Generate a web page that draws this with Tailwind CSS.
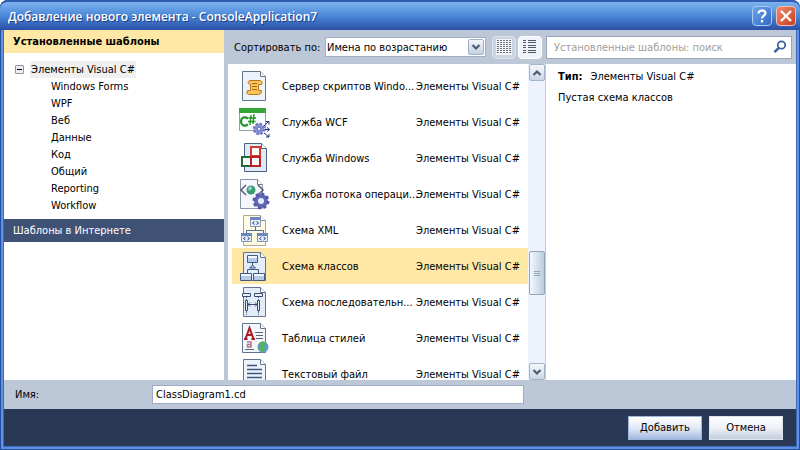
<!DOCTYPE html>
<html lang="ru">
<head>
    <meta charset="UTF-8">
    <meta name="viewport" content="width=device-width, initial-scale=1.0">
    <title>Добавление нового элемента - ConsoleApplication7</title>
    <script src="https://cdn.jsdelivr.net/npm/@tailwindcss/browser@4"></script>
</head>
<body class="h-screen overflow-hidden bg-white font-['DejaVu_Sans_Condensed','DejaVu_Sans',sans-serif] text-[11px] leading-[17px] text-black">
    <div class="flex h-full flex-col rounded-t-lg bg-[#3c6cc0] px-1 pb-1 shadow-[inset_1px_0_#2450a0,inset_-1px_-1px_#2450a0,inset_3px_0_#5f90e4,inset_-3px_-3px_#5f90e4]">

        <!-- Title bar -->
        <header class="-mx-1 flex h-[30px] shrink-0 items-center gap-1 rounded-t-lg border-t-2 border-[#2f5cae] bg-linear-to-b from-[#7db4ee] via-[#4a86d8] to-[#2b4fa5] pr-1 pl-2">
            <h1 class="flex-1 truncate font-['Open_Sans',sans-serif] text-[12px] font-semibold text-white [text-shadow:1px_1px_#1f3f8c]">Добавление нового элемента - ConsoleApplication7</h1>
            <button type="button" aria-label="Справка" class="flex size-5 items-center justify-center rounded-sm border border-[#a9cdf5] bg-linear-to-br from-[#6ca4ea] to-[#3468c4]">
                <svg class="size-4" viewBox="0 0 16 16" fill="none" stroke="#fff" stroke-width="2.2"><path d="M4.5 5.5C4.5 1.5 11.5 1.5 11.5 5.3C11.5 7.6 8 7.6 8 10.4M8 12V14.4"/></svg>
            </button>
            <button type="button" aria-label="Закрыть" class="flex size-5 items-center justify-center rounded-sm border border-[#f0c0b4] bg-linear-to-br from-[#ee8a6c] to-[#c93a18]">
                <svg class="size-4" viewBox="0 0 16 16" fill="none" stroke="#fff" stroke-width="2.4"><path d="M3 3L13 13M13 3L3 13"/></svg>
            </button>
        </header>

        <main class="flex min-h-0 flex-1 gap-1 bg-[#bcc7d8]">
            <!-- Template tree -->
            <nav class="w-[220px] shrink-0 bg-white">
                <h2 class="h-[23px] bg-[#ffe8a6] pl-[9px] leading-[24px] font-bold">Установленные шаблоны</h2>
                <div class="flex items-center gap-[6px] pt-2 pl-[11px]">
                    <button type="button" aria-label="Свернуть" class="flex size-[9px] items-center justify-center rounded-[1px] border border-[#8b97a8] bg-[#eceef2]"><span class="h-px w-[5px] bg-black"></span></button>
                    <a href="#" class="bg-[#f0f0f0] px-px">Элементы Visual C#</a>
                </div>
                <ul class="pl-[47px]">
                    <li><a href="#">Windows Forms</a></li>
                    <li><a href="#">WPF</a></li>
                    <li><a href="#">Веб</a></li>
                    <li><a href="#">Данные</a></li>
                    <li><a href="#">Код</a></li>
                    <li><a href="#">Общий</a></li>
                    <li><a href="#">Reporting</a></li>
                    <li><a href="#">Workflow</a></li>
                </ul>
                <a href="#" class="mt-[5px] block h-[23px] bg-[#3f5175] pl-[9px] leading-[24px] text-white">Шаблоны в Интернете</a>
            </nav>

            <div class="flex min-w-0 flex-1 flex-col">
                <!-- Toolbar -->
                <div class="flex h-[34px] shrink-0 items-center pr-1 pl-[6px]">
                    <label for="sort" class="w-[91px] shrink-0 whitespace-nowrap">Сортировать по:</label>
                    <div class="relative w-[161px] shrink-0">
                        <select id="sort" class="h-5 w-full appearance-none border border-[#9fb0c8] bg-white pl-px">
                            <option>Имена по возрастанию</option>
                            <option>Имена по убыванию</option>
                        </select>
                        <span class="pointer-events-none absolute top-[2px] right-[2px] flex size-4 items-center justify-center rounded-[2px] border border-[#9fb0c8] bg-linear-to-b from-[#f4f7fb] to-[#c4d0e0]">
                            <svg class="h-2 w-[10px]" viewBox="0 0 10 8" fill="none" stroke="#4d5c74" stroke-width="2.2"><path d="M1.5 2L5 5.5L8.5 2"/></svg>
                        </span>
                    </div>
                    <button type="button" aria-label="Мелкие значки" class="ml-[6px] flex h-[23px] w-6 items-center justify-center rounded-sm border border-[#dce2ec] bg-[#ccd4e1]">
                        <svg class="size-4" viewBox="0 0 16 16" fill="none"><path fill="#f4f6fa" d="M0 0H16V16H0Z"/><path stroke="#6a717c" d="M1 1.5H3M4 1.5H6M7 1.5H9M10 1.5H12M13 1.5H15M1 3.5H3M4 3.5H6M7 3.5H9M10 3.5H12M13 3.5H15M1 5.500H3M4 5.500H6M7 5.500H9M10 5.500H12M13 5.500H15M1 7.500H3M4 7.500H6M7 7.500H9M10 7.500H12M13 7.500H15M1 9.500H3M4 9.500H6M7 9.500H9M10 9.500H12M13 9.500H15M1 11.500H3M4 11.500H6M7 11.500H9M10 11.500H12M13 11.500H15M1 13.500H3M4 13.500H6M7 13.500H9M10 13.500H12M13 13.500H15"/></svg>
                    </button>
                    <button type="button" aria-label="Средние значки" class="ml-[2px] flex h-[23px] w-6 items-center justify-center rounded-sm border border-white bg-[#f0f3f8]">
                        <svg class="size-4" viewBox="0 0 16 16" fill="none" stroke="#505868"><path d="M1 1.500H4M6 1.500H14M1 3.500H4M6 3.500H14M1 6.500H4M6 6.500H14M1 8.500H4M6 8.500H14M1 11.500H4M6 11.500H14M1 13.500H4M6 13.500H14"/></svg>
                    </button>
                    <div class="ml-1 flex h-[23px] min-w-0 flex-1 items-center border border-[#9aa5b8] bg-white pr-1 pl-[7px]">
                        <input type="search" aria-label="Установленные шаблоны: поиск" placeholder="Установленные шаблоны: поиск" class="min-w-0 flex-1 outline-none placeholder:text-[#a39e98]">
                        <svg class="size-[14px]" viewBox="0 0 14 14" fill="none" stroke="#3c5fa8"><circle cx="8.5" cy="5" r="3.7" stroke-width="1.7"/><path stroke-width="2.4" d="M5.8 7.8L1.5 12.2"/></svg>
                    </div>
                </div>

                <div class="flex min-h-0 flex-1">
                    <!-- Item list -->
                    <div class="flex w-[318px] shrink-0 overflow-hidden bg-white">
                        <ul class="min-w-0 flex-1 pt-1 pl-1 [&>li]:flex [&>li]:h-9 [&>li]:items-center [&>li]:pl-[6px] [&_svg]:mr-3 [&_svg]:size-8 [&_svg]:shrink-0 [&_b]:w-[134px] [&_b]:shrink-0 [&_b]:whitespace-nowrap [&_b]:font-normal [&_span]:whitespace-nowrap">
                            <li>
                                <svg viewBox="0 0 32 32"><path fill="#eef3fb" stroke="#62748e" d="M4.5 1.5H22.5L27.5 6.5V30.5H4.5Z"/><path fill="#fff" stroke="#62748e" d="M22.5 1.5V6.5H27.5"/><path fill="#f8c45c" stroke="#b57a18" d="M11.500 10.500H22.500Q25.500 12 23.500 14.500H20.500V20.500H23.500Q24 24.500 20.500 24.500H10.500Q7.500 23.500 9.500 20.500H12.500V14.500H11.500Q8.500 12.500 11.500 10.500Z"/><path stroke="#a36a10" d="M14 13.500H19M14 16.500H19M14 19.500H19"/></svg>
                                <b>Сервер скриптов Windo...</b><span>Элементы Visual C#</span>
                            </li>
                            <li>
                                <svg viewBox="0 0 32 32"><path fill="#f8fbff" stroke="#8fa3a3" d="M1.500 2.500H27.500V24.500H1.500Z"/><path fill="#35a535" d="M1 2H28V7H1Z"/><path fill="none" stroke="#229322" stroke-width="2.200" d="M10 12.500C5 9.500 3 13 3 15.500C3 19 6 21 10 18.500"/><path fill="none" stroke="#229322" stroke-width="1.400" d="M13 9L12 19M16 8L15 18M10.500 12H18M10 15.500H17.500"/><circle cx="21" cy="23" r="5" fill="#9298d8" stroke="#7078c0" stroke-width="2.500" stroke-dasharray="2.500 1.400"/><circle cx="21" cy="23" r="2" fill="#dfe3ff" stroke="#5460ae"/><path fill="none" stroke="#1c2c80" d="M26 20L31 15M28 15.500H31V18.500M27 23.500H31.500M29 21.500L31.500 23.500L29 25.500M26 27L31 31M31 28V31H28"/></svg>
                                <b>Служба WCF</b><span>Элементы Visual C#</span>
                            </li>
                            <li>
                                <svg viewBox="0 0 32 32"><path fill="#dfe9f8" stroke="#4d6384" d="M6.500 1.500H23.500L28.500 6.500V29.500H6.500Z"/><path fill="#fff" stroke="#4d6384" d="M23.500 1.500V6.500H28.500"/><g fill="#fff" stroke-width="2"><path stroke="#d53b2f" d="M13 5H22V14H13Z"/><path stroke="#236c36" d="M4 15H13V24H4Z"/><path stroke="#b82222" d="M13 15H22V24H13Z"/></g></svg>
                                <b>Служба Windows</b><span>Элементы Visual C#</span>
                            </li>
                            <li>
                                <svg viewBox="0 0 32 32"><path fill="#f4f7fc" stroke="#8a94a6" d="M2.500 1.500H19.500L24.500 6.500V30.500H2.500Z"/><path fill="#fff" stroke="#6d7b91" d="M19.500 1.500V6.500H24.500"/><path fill="none" stroke="#566174" stroke-width="1.500" d="M8 7L3 12L8 17M20 7L25 12L20 17"/><circle cx="13" cy="12" r="4.500" fill="#3f9a70"/><path fill="#8fd1e8" d="M10 10L13 8L14 11L11 13Z"/><circle cx="23" cy="23" r="7" fill="#6068b4" stroke="#535aa8" stroke-width="3" stroke-dasharray="3 2.500"/><circle cx="23" cy="23" r="3" fill="#e8ebff"/></svg>
                                <b>Служба потока операци...</b><span>Элементы Visual C#</span>
                            </li>
                            <li>
                                <svg viewBox="0 0 32 32"><path fill="#fffbe0" stroke="#a9a98e" d="M5.500 1.500H22.500L27.500 6.500V31.500H5.500Z"/><path fill="#fff" stroke="#8e9aa8" d="M22.500 1.500V6.500H27.500"/><path fill="none" stroke="#526a9c" d="M17.500 12V16.500M8.500 20V16.500H25.500V20"/><g fill="#e8eefc" stroke="#8596bc"><path d="M12.500 3.500H22.500V12.500H12.500Z"/><path d="M3.500 19.500H13.500V27.500H3.500Z"/><path d="M19.500 19.500H29.500V27.500H19.500Z"/></g><path fill="#6d86c0" d="M12 3H23V6H12ZM3 19H14V22H3ZM19 19H30V22H19Z"/><path fill="none" stroke="#2a3d7c" d="M16.500 7.500L14.500 9L16.500 10.500M18.500 7.500L20.500 9L18.500 10.500M7.500 23L5.500 24.500L7.500 26M9.500 23L11.500 24.500L9.500 26M23.500 23L21.500 24.500L23.500 26M25.500 23L27.500 24.500L25.500 26"/></svg>
                                <b>Схема XML</b><span>Элементы Visual C#</span>
                            </li>
                            <li class="bg-[#ffe8a6]">
                                <svg viewBox="0 0 32 32"><path fill="#e4edf9" stroke="#62748e" d="M5.500 2.500H22.500L27.500 7.500V30.500H5.500Z"/><path fill="#fff" stroke="#62748e" d="M22.500 2.500V7.500H27.500"/><path fill="none" stroke="#435a80" d="M14.500 12V18M9.500 25V19.500H20.500V25"/><path fill="#b6c9e6" stroke="#435a80" d="M14.500 15L17.500 18H11.500ZM9.500 5.500H19.500V12.500H9.500ZM2.500 23.500H13.500V30.500H2.500ZM15.500 23.500H26.500V30.500H15.500Z"/><path fill="#f1f6ff" d="M10 6H19V8H10ZM3 24H13V26H3ZM16 24H26V26H16Z"/></svg>
                                <b>Схема классов</b><span>Элементы Visual C#</span>
                            </li>
                            <li>
                                <svg viewBox="0 0 32 32"><path fill="#e4ecf8" stroke="#62748e" d="M5.500 1.500H22.500L27.500 6.500V30.500H5.500Z"/><path fill="#fff" stroke="#62748e" d="M22.500 1.500V6.500H27.500"/><path fill="none" stroke="#536890" stroke-dasharray="2 1" d="M8.500 10V29M20.500 10V29"/><g fill="#e8f0fc" stroke="#3a4c70"><path d="M4.500 7.500H12.500V10.500H4.500Z"/><path d="M16.500 7.500H24.500V10.500H16.500Z"/><path d="M7.500 14.500H9.500V24.500H7.500Z"/><path d="M19.500 14.500H21.500V24.500H19.500Z"/></g><path fill="none" stroke="#3a4c70" d="M10 18.500H19M12 16.500L10 18.500L12 20.500M17 16.500L19 18.500L17 20.500"/></svg>
                                <b>Схема последовательн...</b><span>Элементы Visual C#</span>
                            </li>
                            <li>
                                <svg viewBox="0 0 32 32"><path fill="#f4f6fb" stroke="#62748e" d="M4.500 1.500H22.500L27.500 6.500V30.500H4.500Z"/><path fill="#fff" stroke="#62748e" d="M22.500 1.500V6.500H27.500"/><path fill="none" stroke="#a81c24" stroke-width="2" d="M7.500 17L11.500 6L15.500 17M8.500 13H14.500M6 17H9.500M13.500 17H17"/><path fill="none" stroke="#56657e" d="M17 10.500H25M18 13.500H25M18 16.500H25M7 27.500H16"/><path fill="none" stroke="#b07a88" stroke-width="1.500" d="M9 20H13V25H9.500V22.500H13"/><circle cx="25" cy="25" r="5.500" fill="#5b9ccc"/><path fill="#56b454" d="M21 21Q25 18 28 21L26 24L27 27L24 30L20 27L23 24Z"/></svg>
                                <b>Таблица стилей</b><span>Элементы Visual C#</span>
                            </li>
                            <li>
                                <svg viewBox="0 0 32 32"><path fill="#edf3fb" stroke="#62748e" d="M5.500 1.500H22.500L27.500 6.500V30.500H5.500Z"/><path fill="#fff" stroke="#62748e" d="M22.500 1.500V6.500H27.500"/><path stroke="#3f5580" stroke-width="1.400" d="M9 7.500H19M9 11.500H24M9 15.500H24M9 19.500H24M9 23.500H24"/></svg>
                                <b>Текстовый файл</b><span>Элементы Visual C#</span>
                            </li>
                        </ul>
                        <!-- Scroll bar -->
                        <div class="flex w-[18px] shrink-0 flex-col items-center border-r border-[#c4cbd8] bg-[#eef2fc]">
                            <button type="button" aria-label="Вверх" class="flex h-[17px] w-4 items-center justify-center rounded-[2px] border border-[#a4b4c8] bg-linear-to-b from-[#f5f8fc] to-[#cbd7e6]"><svg class="h-2 w-[10px]" viewBox="0 0 10 8" fill="none" stroke="#4d5c74" stroke-width="2.2"><path d="M1.500 6L5 2.500L8.500 6"/></svg></button>
                            <div class="grow-[170]"></div>
                            <div class="flex h-11 w-4 flex-col items-center justify-center gap-px rounded-[2px] border border-[#92a5bb] bg-linear-to-r from-[#f4f8fc] to-[#b9cde0]">
                                <span class="h-px w-[6px] bg-[#91aac2]"></span>
                                <span class="h-px w-[6px] bg-[#91aac2]"></span>
                                <span class="h-px w-[6px] bg-[#91aac2]"></span>
                            </div>
                            <div class="grow-[68]"></div>
                            <button type="button" aria-label="Вниз" class="flex h-[17px] w-4 items-center justify-center rounded-[2px] border border-[#a4b4c8] bg-linear-to-b from-[#f5f8fc] to-[#cbd7e6]"><svg class="h-2 w-[10px]" viewBox="0 0 10 8" fill="none" stroke="#4d5c74" stroke-width="2.2"><path d="M1.500 2L5 5.500L8.500 2"/></svg></button>
                        </div>
                    </div>

                    <!-- Item details -->
                    <section class="min-w-0 flex-1 bg-white pt-1 pl-3">
                        <p><strong class="mr-2">Тип:</strong>Элементы Visual C#</p>
                        <p class="mt-1">Пустая схема классов</p>
                    </section>
                </div>
            </div>
        </main>

        <div class="flex h-[29px] shrink-0 items-center bg-[#bcc7d8] pl-[11px]">
            <label for="name" class="w-[137px]">Имя:</label>
            <input id="name" type="text" value="ClassDiagram1.cd" class="h-[19px] w-[372px] border border-[#9fabc0] bg-white px-[3px] outline-none">
        </div>

        <footer class="flex h-[37px] shrink-0 items-center justify-end gap-[7px] bg-[#293955] pr-[13px]">
            <button type="button" class="h-6 w-[74px] border border-[#9fb6dc] bg-linear-to-b from-white via-[#e2e9f5] to-[#a4b9e0]">Добавить</button>
            <button type="button" class="h-6 w-[74px] border border-[#dde3ec] bg-linear-to-b from-white via-[#eef1f6] to-[#c3cddc]">Отмена</button>
        </footer>
    </div>
</body>
</html>
